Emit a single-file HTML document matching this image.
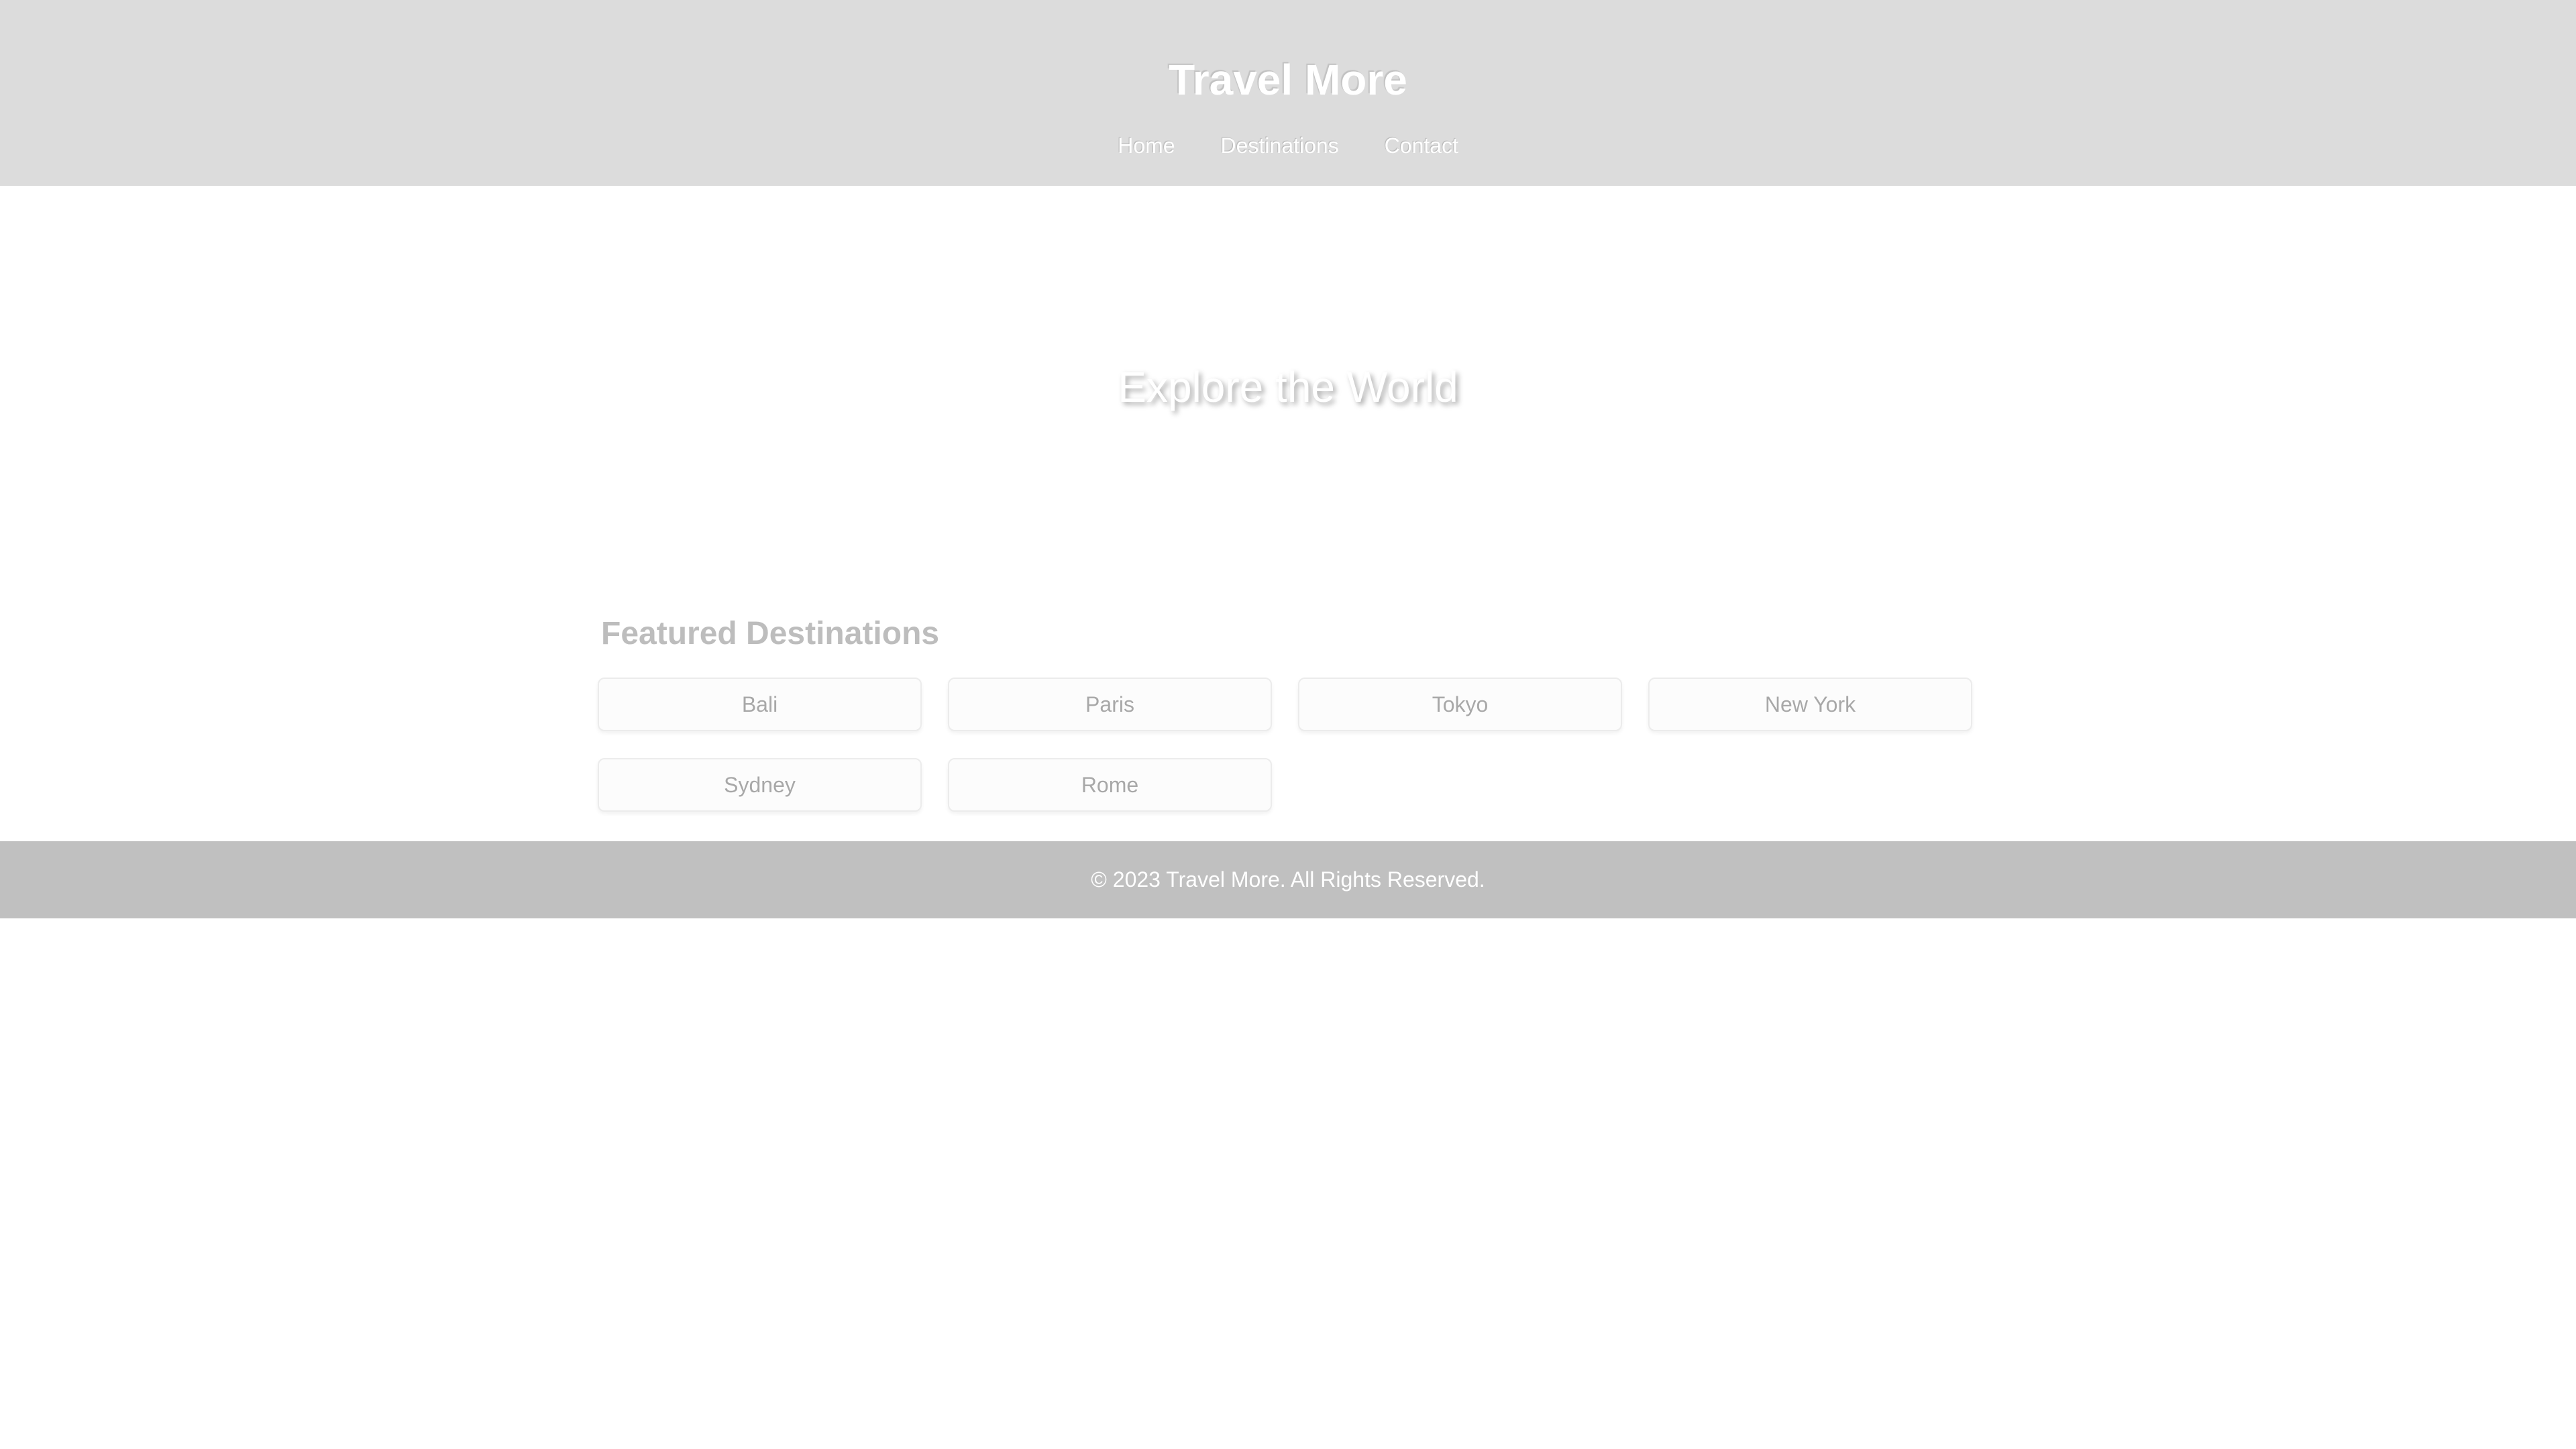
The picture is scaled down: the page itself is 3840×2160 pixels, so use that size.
<!DOCTYPE html>
<html><head><meta charset="utf-8"><style>
html,body{margin:0;padding:0;width:3840px;height:2160px;background:#fff;overflow:hidden;font-family:"Liberation Sans",Arial,sans-serif}
header{position:absolute;left:0;top:0;width:3840px;height:277px;background:#dcdcdc;text-align:center}
header h1{position:absolute;left:0;right:0;top:87px;margin:0;font-size:64px;font-weight:bold;color:#fff;line-height:1;text-shadow:-2px -2px 1px rgba(0,0,0,0.12)}
nav{position:absolute;left:0;right:0;top:201px;font-size:32px;color:#fff;line-height:1;text-shadow:-1px -1px 1px rgba(0,0,0,0.18)}
nav span{margin:0 34px}
.hero{position:absolute;left:0;right:0;top:545px;text-align:center;font-size:64px;color:#fff;line-height:1;text-shadow:4px 4px 8px rgba(0,0,0,0.35)}
.feat{position:absolute;left:896px;top:921px;font-size:48px;font-weight:bold;color:#bdbdbd;line-height:1}
.card{position:absolute;width:479px;height:76px;background:#fcfcfc;border:2px solid #ececec;border-radius:10px;box-shadow:0 3px 6px rgba(0,0,0,0.06);text-align:center;line-height:76px;font-size:32px;color:#a8a8a8}
footer{position:absolute;left:0;top:1254px;width:3840px;height:115px;background:#c0c0c0;text-align:center;color:#fff;font-size:32px;line-height:115px}
</style></head><body>
<header><h1>Travel More</h1><nav><span>Home</span><span>Destinations</span><span>Contact</span></nav></header>
<div class="hero">Explore the World</div>
<div class="feat">Featured Destinations</div>
<div class="card" style="left:891px;top:1010px">Bali</div>
<div class="card" style="left:1413px;top:1010px">Paris</div>
<div class="card" style="left:1935px;top:1010px">Tokyo</div>
<div class="card" style="left:2457px;top:1010px">New York</div>
<div class="card" style="left:891px;top:1130px">Sydney</div>
<div class="card" style="left:1413px;top:1130px">Rome</div>
<footer>© 2023 Travel More. All Rights Reserved.</footer>
</body></html>
